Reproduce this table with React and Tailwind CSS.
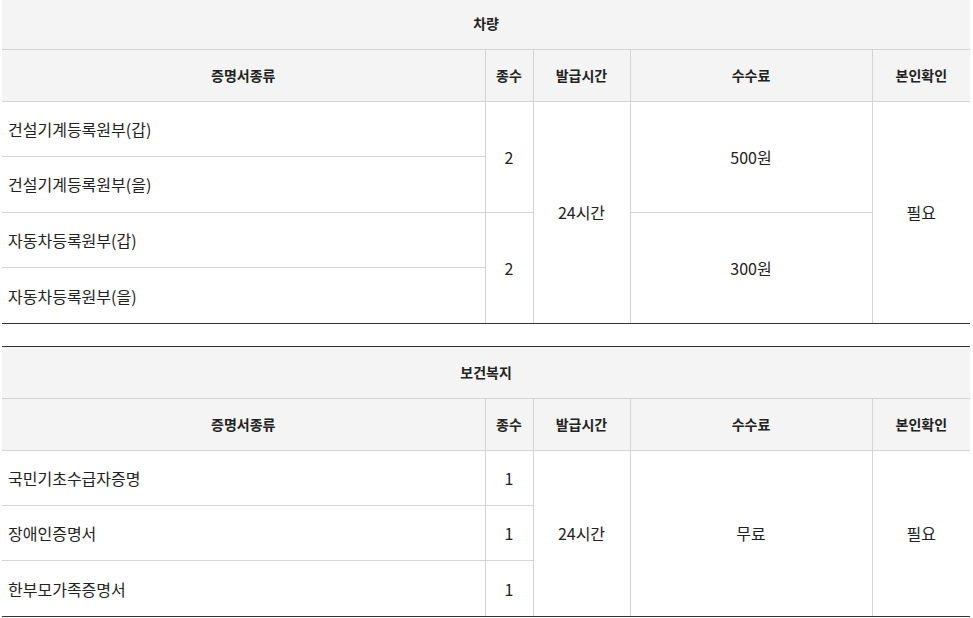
const vehicleGroups = [
  {
    count: 2,
    fee: "500원",
    items: ["건설기계등록원부(갑)", "건설기계등록원부(을)"],
  },
  {
    count: 2,
    fee: "300원",
    items: ["자동차등록원부(갑)", "자동차등록원부(을)"],
  },
];

const headers = ["증명서종류", "종수", "발급시간", "수수료", "본인확인"];

function Head({ title }) {
  return (
    <thead>
      <tr className="h-[51px] bg-[#f4f4f4]">
        <th
          colSpan={5}
          className="border-b border-[#d4d4d4] text-[14px] font-bold text-[#222]"
        >
          {title}
        </th>
      </tr>
      <tr className="h-[52px] bg-[#f4f4f4]">
        {headers.map((h, i) => (
          <th
            key={h}
            className={`border-b border-[#d4d4d4] text-[14px] font-bold text-[#222] ${
              i > 0 ? "border-l" : ""
            }`}
          >
            {h}
          </th>
        ))}
      </tr>
    </thead>
  );
}

function Cols() {
  return (
    <colgroup>
      <col className="w-[483px]" />
      <col className="w-[48px]" />
      <col className="w-[97px]" />
      <col className="w-[242px]" />
      <col className="w-[98px]" />
    </colgroup>
  );
}

const cell = "border-[#d4d4d4] text-[16px] text-[#222]";

function VehicleTable() {
  const total = vehicleGroups.reduce((n, g) => n + g.items.length, 0);
  return (
    <div className="w-[968px] border-y border-[#333]">
      <table className="w-full table-fixed border-collapse">
        <Cols />
        <Head title="차량" />
        <tbody>
          {vehicleGroups.map((g, gi) =>
            g.items.map((item, ii) => {
              const lastGroup = gi === vehicleGroups.length - 1;
              const lastRow = lastGroup && ii === g.items.length - 1;
              return (
                <tr key={item} className="h-[55.5px]">
                  <td className={`${cell} pl-[6px] text-left ${lastRow ? "" : "border-b"}`}>
                    {item}
                  </td>
                  {ii === 0 && (
                    <td
                      rowSpan={g.items.length}
                      className={`${cell} border-l text-center ${lastGroup ? "" : "border-b"}`}
                    >
                      {g.count}
                    </td>
                  )}
                  {gi === 0 && ii === 0 && (
                    <td rowSpan={total} className={`${cell} border-l text-center`}>
                      24시간
                    </td>
                  )}
                  {ii === 0 && (
                    <td
                      rowSpan={g.items.length}
                      className={`${cell} border-l text-center ${lastGroup ? "" : "border-b"}`}
                    >
                      {g.fee}
                    </td>
                  )}
                  {gi === 0 && ii === 0 && (
                    <td rowSpan={total} className={`${cell} border-l text-center`}>
                      필요
                    </td>
                  )}
                </tr>
              );
            })
          )}
        </tbody>
      </table>
    </div>
  );
}

function WelfareTable() {
  const items = ["국민기초수급자증명", "장애인증명서", "한부모가족증명서"];
  return (
    <div className="mt-[22px] w-[968px] border-y border-[#333]">
      <table className="w-full table-fixed border-collapse">
        <Cols />
        <Head title="보건복지" />
        <tbody>
          {items.map((item, i) => {
            const last = i === items.length - 1;
            return (
              <tr key={item} className="h-[55.4px]">
                <td className={`${cell} pl-[6px] text-left ${last ? "" : "border-b"}`}>{item}</td>
                <td className={`${cell} border-l text-center ${last ? "" : "border-b"}`}>1</td>
                {i === 0 && (
                  <>
                    <td rowSpan={3} className={`${cell} border-l text-center`}>
                      24시간
                    </td>
                    <td rowSpan={3} className={`${cell} border-l text-center`}>
                      무료
                    </td>
                    <td rowSpan={3} className={`${cell} border-l text-center`}>
                      필요
                    </td>
                  </>
                )}
              </tr>
            );
          })}
        </tbody>
      </table>
    </div>
  );
}

export default function App() {
  return (
    <div
      className="min-h-[618px] bg-white pl-[2px]"
      style={{ fontFamily: '"Noto Sans CJK KR", "Noto Sans", sans-serif' }}
    >
      <div className="-mt-[3px]">
        <VehicleTable />
        <WelfareTable />
      </div>
    </div>
  );
}
